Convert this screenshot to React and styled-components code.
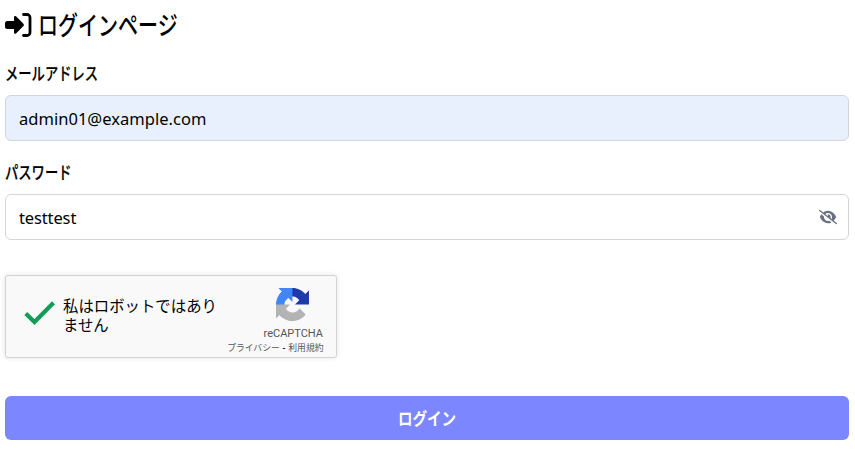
import React from "react";
import styled, { createGlobalStyle } from "styled-components";
import { FaEyeSlash } from "react-icons/fa6";

const GlobalStyle = createGlobalStyle`
  *, *::before, *::after { box-sizing: border-box; }
  body {
    margin: 0;
    background: #fff;
    color: #000;
    font-family: "Noto Sans", "Noto Sans CJK JP", sans-serif;
  }
`;

const Page = styled.main`
  display: flex;
  flex-direction: column;
  width: 100%;
  padding: 7px 6px 12px 5px;
`;

const Title = styled.h1`
  display: flex;
  align-items: center;
  gap: 6px;
  height: 34px;
  margin: 0 0 20px;
  font: 500 26px/34px "Noto Sans CJK JP", sans-serif;
`;

const TitleIcon = styled.svg`
  flex: none;
  width: 27px;
  height: 24px;
  margin-top: 2px;
`;

const Narrow = styled.span`
  display: inline-block;
  white-space: nowrap;
  transform: scaleX(${(p) => p.$scale});
  transform-origin: ${(p) => p.$origin || "left"};
`;

const Field = styled.div`
  display: flex;
  flex-direction: column;
  gap: 10px;
  margin-bottom: 19px;
`;

const Label = styled.label`
  height: 24px;
  font: 500 17.5px/24px "Noto Sans CJK JP", sans-serif;
  -webkit-text-stroke: 0.2px currentColor;
`;

const InputBox = styled.div`
  display: flex;
  align-items: center;
  height: 46px;
  padding: 0 11px 0 13px;
  border: 1px solid #d1d5dc;
  border-radius: 6px;
  background: ${(p) => (p.$filled ? "#e8f0fe" : "#fff")};
`;

const Input = styled.input`
  flex: 1;
  min-width: 0;
  padding: 1px 0 0;
  border: 0;
  outline: 0;
  background: transparent;
  color: #000;
  font: 400 16.5px/24px "Noto Sans", sans-serif;
  letter-spacing: ${(p) => p.$spacing};
`;

const Toggle = styled.button`
  display: flex;
  padding: 0;
  border: 0;
  background: none;
  color: #6a7282;
  svg { width: 18px; height: 16px; }
`;

const Captcha = styled.section`
  display: flex;
  width: 332px;
  height: 83px;
  margin: 16px 0 38px;
  border: 1px solid #d3d3d3;
  border-radius: 3px;
  background: #f9f9f9;
  box-shadow: 0 0 4px 1px rgba(0, 0, 0, 0.08);
`;

const Check = styled.svg`
  flex: none;
  width: 32px;
  height: 26px;
  margin: 24px 7px 0 18px;
`;

const CaptchaText = styled.p`
  flex: none;
  width: 160px;
  margin: 20px 0 0;
  font: 400 15.4px/19px "Noto Sans CJK JP", sans-serif;
`;

const Brand = styled.div`
  display: flex;
  flex-direction: column;
  align-items: flex-end;
  flex: 1;
  padding: 12px 13px 0 0;
  color: #555;
`;

const Logo = styled.svg`
  width: 33px;
  height: 33px;
  margin-right: 14px;
`;

const BrandName = styled.span`
  margin-top: 6px;
  font: 400 11px/13px Roboto, sans-serif;
`;

const Links = styled.span`
  margin: 2px -0.5px 0 0;
  font: 400 8.8px/12px Roboto, "Noto Sans CJK JP", sans-serif;
  white-space: nowrap;
  b { margin: 0 0.6px; color: #000; font-weight: 500; }
`;

const Submit = styled.button`
  height: 44px;
  padding: 0;
  border: 0;
  border-radius: 6px;
  background: #7c86ff;
  color: #fff;
  font: 700 17.5px/44px "Noto Sans CJK JP", sans-serif;
`;

export default function App() {
  return (
    <>
      <GlobalStyle />
      <Page>
        <Title>
          <TitleIcon viewBox="0 0 27 24">
            <path d="M2.5 8H9V4.2a1.2 1.2 0 0 1 2-.9l7.2 7.3a1.8 1.8 0 0 1 0 2.6L11 20.5a1.2 1.2 0 0 1-2-.9V16H2.5A2.5 2.5 0 0 1 0 13.5v-3A2.5 2.5 0 0 1 2.5 8Z" />
            <path d="M18.5 1.5H22a3 3 0 0 1 3 3v15a3 3 0 0 1-3 3h-3.5" fill="none" stroke="currentColor" strokeWidth="2.8" strokeLinecap="round" />
          </TitleIcon>
          <Narrow $scale={0.77}>ログインページ</Narrow>
        </Title>
        <Field>
          <Label htmlFor="email"><Narrow $scale={0.76}>メールアドレス</Narrow></Label>
          <InputBox $filled>
            <Input id="email" defaultValue="admin01@example.com" $spacing="0.03px" />
          </InputBox>
        </Field>
        <Field>
          <Label htmlFor="password"><Narrow $scale={0.76}>パスワード</Narrow></Label>
          <InputBox>
            <Input id="password" defaultValue="testtest" $spacing="-0.13px" />
            <Toggle type="button" aria-label="パスワードを隠す"><FaEyeSlash /></Toggle>
          </InputBox>
        </Field>
        <Captcha>
          <Check viewBox="0 0 32 26">
            <path d="M1.8 13.5 10.5 22 29.5 2.8" fill="none" stroke="#0f9d58" strokeWidth="4.2" />
          </Check>
          <CaptchaText>私はロボットではありません</CaptchaText>
          <Brand>
            <Logo viewBox="0 0 64 64">
              <path fill="#1c3aa9" d="M64 31.955l-.033-1.37V4.687l-7.16 7.16C50.948 4.674 42.033.093 32.05.093c-10.4 0-19.622 4.96-25.458 12.64l11.736 11.86a15.55 15.55 0 0 1 4.754-5.334c2.05-1.6 4.952-2.906 8.968-2.906.485 0 .86.057 1.135.163 4.976.393 9.288 3.14 11.828 7.124l-8.307 8.307L64 31.953" />
              <path fill="#4285f4" d="M31.862.094l-1.37.033H4.594l7.16 7.16C4.58 13.147 0 22.06 0 32.046c0 10.4 4.96 19.622 12.64 25.458L24.5 45.768a15.55 15.55 0 0 1-5.334-4.754c-1.6-2.05-2.906-4.952-2.906-8.968 0-.485.057-.86.163-1.135.393-4.976 3.14-9.288 7.124-11.828l8.307 8.307L31.86.095" />
              <path fill="#b3b3b3" d="M.001 32.045l.033 1.37v25.898l7.16-7.16c5.86 7.173 14.774 11.754 24.76 11.754 10.4 0 19.622-4.96 25.458-12.64l-11.736-11.86a15.55 15.55 0 0 1-4.754 5.334c-2.05 1.6-4.952 2.906-8.968 2.906-.485 0-.86-.057-1.135-.163-4.976-.393-9.288-3.14-11.828-7.124l8.307-8.307c-10.522.04-22.4.066-27.295-.005" />
            </Logo>
            <BrandName>reCAPTCHA</BrandName>
            <Links>プライバシー <b>-</b> 利用規約</Links>
          </Brand>
        </Captcha>
        <Submit type="button"><Narrow $scale={0.83} $origin="center">ログイン</Narrow></Submit>
      </Page>
    </>
  );
}
